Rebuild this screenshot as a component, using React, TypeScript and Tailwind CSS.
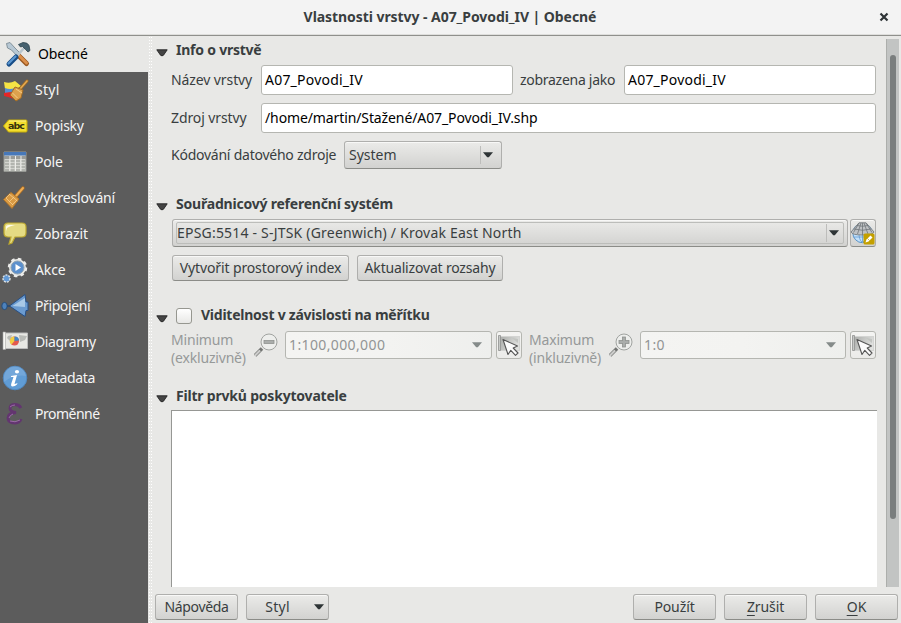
import type { ReactNode } from "react";

function Arrow({ className = "fill-[#2e3436]" }: { className?: string }) {
  return (
    <svg width="10" height="6" viewBox="0 0 10 6" className={`shrink-0 ${className}`}>
      <path d="M0 .3h10L5.8 5.3H4.2z" />
    </svg>
  );
}

function SectionTitle({ children, tracking, check = false }: { children: string; tracking: string; check?: boolean }) {
  return (
    <div className="flex h-5 items-center">
      <svg width="12" height="8" viewBox="0 0 12 8" className={`${check ? "mt-2" : "mt-1.5"} ml-[3px] shrink-0`}>
        <path d="M.8.8h10.4L7.5 6.2Q6 7.5 4.5 6.2z" fill="#444" stroke="#222" strokeWidth=".9" />
      </svg>
      {check && (
        <span className="mt-0.5 ml-2 h-4 w-4 shrink-0 rounded-[3px] border border-[#969790] bg-linear-to-b from-white to-[#e8e8e6]" />
      )}
      <span className={`${check ? "ml-[9px]" : "ml-2"} text-[14px] leading-5 font-bold whitespace-nowrap text-[#393e40] ${tracking}`}>{children}</span>
    </div>
  );
}

function Button({ children, className }: { children: ReactNode; className: string }) {
  return (
    <button
      className={`flex shrink-0 items-center justify-center rounded-[3px] border border-[#afafad] border-b-[#8b8c88] bg-linear-to-b from-[#ebebe9] to-[#d2d2d0] whitespace-nowrap shadow-[inset_0_1px_0_#f8f8f7] ${className}`}
    >
      {children}
    </button>
  );
}

function Field({ children, className }: { children: string; className: string }) {
  return (
    <div className={`flex h-[30px] shrink-0 items-center rounded-[3px] border border-[#b5b6b1] bg-white pl-[3px] text-black ${className}`}>{children}</div>
  );
}

function ScaleCombo({ children, className }: { children: string; className: string }) {
  return (
    <div className={`flex h-7 shrink-0 items-center justify-between rounded-[3px] border border-[#b5b6b1] bg-linear-to-r from-[#f4f4f2] via-[#f3f3f1] to-[#eeefed] pr-[9px] pl-[3px] tracking-[0.38px] text-[#929595] ${className}`}>
      {children}
      <Arrow className="fill-[#858b8a]" />
    </div>
  );
}

function Magnifier({ plus = false }: { plus?: boolean }) {
  return (
    <svg width="24" height="24" viewBox="0 0 24 24" className="shrink-0">
      <path d="m1 22.5 7-7" stroke="#737573" strokeWidth="3.6" />
      <path d="m1 22.5 5-5" stroke="#e8e8e6" strokeWidth="2" />
      <path d="m1 22.5 5-5" stroke="#999" strokeWidth=".7" />
      <circle cx="15" cy="9" r="8" fill="#edeeec" stroke="#a0a3a0" />
      <rect x="10" y="7.5" width="10" height="3" fill="#aaadab" stroke="#8f9290" strokeWidth=".8" />
      {plus && (
        <>
          <rect x="13.5" y="4" width="3" height="10" fill="#aaadab" stroke="#8f9290" strokeWidth=".8" />
          <path d="M11 9h8" stroke="#aaadab" strokeWidth="2" />
        </>
      )}
    </svg>
  );
}

function CanvasButton({ className }: { className: string }) {
  return (
    <button className={`flex h-7 w-[26px] shrink-0 items-center justify-center rounded-[3px] border border-[#b5b6b1] bg-linear-to-b from-[#f4f4f2] to-[#ebebe9] ${className}`}>
      <svg width="24" height="24" viewBox="0 0 24 24" className="shrink-0">
        <defs>
          <linearGradient id="sheet" x1="0" x2="1" y1="0" y2="0.4">
            <stop offset="0" stopColor="#a9aba8" />
            <stop offset="1" stopColor="#dfe0de" />
          </linearGradient>
        </defs>
        <rect x="2.5" y="3.500" width="20" height="14" fill="url(#sheet)" stroke="#d3d4d2" />
        <path d="M15 5l6 1v4z" fill="#c3c5c2" />
        <path d="M1.500 2.500h2v15h-2z" fill="#c7c9c6" stroke="#8f918f" strokeWidth=".8" />
        <path d="M6 6.500 20.500 13l-4.300 2 4.800 5-2.500 2.300-4.700-5-2.800 4.200z" fill="#fbfbfb" stroke="#555" strokeWidth="1.100" strokeLinejoin="round" />
      </svg>
    </button>
  );
}

function Globe() {
  return (
    <svg width="26" height="26" viewBox="0 0 26 26" className="shrink-0">
      <circle cx="12.5" cy="13" r="9.7" fill="#c3e1fa" stroke="#5592c9" />
      <path d="M3.5 17h18M9 13q0 7 3 9M16 13q0 7-3 9M12.5 13v9" fill="none" stroke="#659bd0" strokeWidth=".8" />
      <path d="M9 2.8h7l8 9.2q-1 3-11.500 3T1 12z" fill="#bfc2c5" stroke="#7f8487" strokeWidth="1" />
      <path d="M7 5.5q5.500 1.500 11 0M4 9q8.500 2.500 17 0M11 3 7.500 14M14 3l4 11M12.500 3v12M9 3 3.500 12.500M16 3l6 9.500" fill="none" stroke="#70767a" strokeWidth=".8" />
      <rect x="13.500" y="13.500" width="11" height="11" rx="1.500" fill="#c4a000" />
      <path d="m15.500 22.500 1-3 4-4 2 2-4 4z" fill="#fff" />
      <path d="m17.500 18.500 2 2" stroke="#c4a000" strokeWidth=".7" />
    </svg>
  );
}

const icons: Record<string, ReactNode> = {
  tools: (
    <>
      <path d="m15 15 8.500 8.500" stroke="#9a5821" strokeWidth="5" strokeLinecap="round" />
      <path d="m15 14.500 8.500 8.500" stroke="#db8f4b" strokeWidth="3" strokeLinecap="round" />
      <path d="m3.500 3.500 3.500-1L12 8l5 5-3 3-5.500-6-4-2z" fill="#b7c8d4" stroke="#71818c" strokeWidth=".8" />
      <path d="m14 16 7-8" stroke="#b9c6ce" strokeWidth="2.600" />
      <path d="m15.500 4.500 4.500-2q5 0 6 3l1 5-2 1.500-2.500-2.500-3-3-2 .5z" fill="#46616f" stroke="#2c424d" strokeWidth=".8" />
      <path d="m6 24 7-7" stroke="#174d87" strokeWidth="5" strokeLinecap="round" />
      <path d="m5.500 23.500 7-7" stroke="#5b96d0" strokeWidth="2.200" strokeLinecap="round" />
    </>
  ),
  style: (
    <>
      <path d="M1 6q6 2 11-1l6 5-6 4q-6 1-10-1z" fill="#f5e445" />
      <path d="M2 12q5 2 10 0l2 5q-6 3-12 1z" fill="#568dce" />
      <path d="M1 17q5-1 9-1l5 6-4 1q-5-2-10-3z" fill="#e52626" />
      <path d="m17 13 7-8" stroke="#a56b20" strokeWidth="3" strokeLinecap="round" />
      <path d="m17 13 7-8" stroke="#e3ab55" strokeWidth="1.500" strokeLinecap="round" />
      <path d="m12 11 8 3-2 8-5 3-6-6z" fill="#dda14d" stroke="#a36c25" />
      <path d="m13 13 6 4M9.500 17l5 5" stroke="#f5ce88" />
    </>
  ),
  label: (
    <>
      <path d="m.5 14 5-6H23q1 0 1 1v10q0 1-1 1H5.500z" fill="#f2dd2f" stroke="#c7ad08" />
      <path d="M6 9h17" stroke="#faf08c" />
      <text x="5" y="17.200" fontSize="9.500" fontWeight="bold" fontFamily="DejaVu Sans, sans-serif" fill="#34310d" textLength="17">abc</text>
    </>
  ),
  table: (
    <>
      <path d="M1 4h22v19.500H1z" fill="#d3d4cf" stroke="#969894" />
      <path d="M1 4h22v3.500H1z" fill="#4778b9" />
      <path d="M1 8h22v3H1z" fill="#999b98" />
      <path d="M7 8v15M12.500 8v15M18 8v15" stroke="#eeeeea" />
      <path d="M2 13h20M2 16h20M2 19h20M2 22h20" stroke="#92958f" strokeDasharray="4 1.500" />
    </>
  ),
  broom: (
    <>
      <path d="m13 12 7-8" stroke="#a46b28" strokeWidth="3.600" strokeLinecap="round" />
      <path d="m13 12 7-8" stroke="#efad54" strokeWidth="2" strokeLinecap="round" />
      <path d="m8 8.500 8 6.500-7 9.500-8.500-9z" fill="#d99a43" stroke="#b27528" />
      <path d="m6 10 8.500 7M3 14l7 7M7 10l-4 4M11 13l-5 5M14 16l-5 5" stroke="#f5ce91" strokeWidth=".8" />
    </>
  ),
  bubble: (
    <>
      <path d="M5 3h14q4 0 4 4v6q0 4-4 4h-7l-3 6-3 1 2-7H5q-4 0-4-4V7q0-4 4-4z" fill="#e5db83" stroke="#bca72f" strokeWidth="1.200" />
      <path d="M3 11V7q0-2 3-2h6Q7 6 4 8z" fill="#fffde8" />
    </>
  ),
  action: (
    <>
      <circle cx="14.500" cy="11.500" r="8.500" fill="#e7e8e4" stroke="#ececea" strokeWidth="2.500" strokeDasharray="3.500 3.180" />
      <circle cx="14.500" cy="11.500" r="6.500" fill="#5c90cd" stroke="#8fa3b5" />
      <path d="m12.500 8 5.500 3.500-5.500 3.500z" fill="#fff" />
      <circle cx="3.500" cy="22.500" r="3.500" fill="#639ad7" stroke="#dce1e4" strokeWidth="1.500" strokeDasharray="2 1" />
    </>
  ),
  join: (
    <>
      <path d="M6.500 14 22 2.500l1 7.500h2v8.500h-2l-1 6z" fill="#6b9bd0" stroke="#274f85" />
      <path d="m9.500 14 12.500-8v9z" fill="#a9c9e7" />
      <ellipse cx="1.500" cy="14" rx="2.700" ry="3.600" fill="#4e82bb" stroke="#234d7d" />
      <path d="M4 14h3" stroke="#244873" strokeWidth="1.500" />
    </>
  ),
  diagram: (
    <>
      <path d="M1 5h23.500v15.500H1z" fill="#e8e8e4" stroke="#bbb" />
      <path d="m5 8 4-1-2 6-3-3zM16 7l8 1-2 4-5 2z" fill="#b9bbb7" />
      <path d="M0 4h2.500v17.500H0z" fill="#f7f7f4" stroke="#aaa" strokeWidth=".6" />
      <circle cx="11.500" cy="13" r="4.500" fill="#e45a4e" />
      <path d="M11.500 13V8.500a4.500 4.500 0 0 0-3 8z" fill="#f2cf43" />
      <path d="M11.500 13V8.500q4.500 0 4.500 4z" fill="#4487c5" />
    </>
  ),
  info: (
    <>
      <circle cx="12" cy="14" r="11.800" fill="#609cd5" stroke="#5188bf" />
      <path d="M1 15A11 11 0 0 1 23 12Q11 10 1 18z" fill="#84b1df" opacity=".55" />
      <ellipse cx="14" cy="7.800" rx="2.100" ry="1.800" fill="#fff" />
      <path d="m8 12 6-1-2.500 9q1 0 3-1l-.5 1.500q-2 2-4.500 2-2 0-1.200-3L10.500 13H8z" fill="#fff" />
    </>
  ),
  epsilon: (
    <>
      <path d="M18 8q-2-3.500-6-3.500-5 0-5 4 0 3 6 4-8 .5-8 5.500 0 5 7 5 5 0 6-4" fill="none" stroke="#633570" strokeWidth="2.800" />
      <path d="M7 7q2-2 5-2M6 18q1-3 4-4M7 21q5 2 10-1" fill="none" stroke="#a876b5" strokeWidth=".8" />
    </>
  ),
};

const menu = [
  ["tools", "Obecné", "tracking-[-0.15px]"],
  ["style", "Styl", "tracking-[0.25px]"],
  ["label", "Popisky", "tracking-[-0.25px]"],
  ["table", "Pole", "tracking-[-0.2px]"],
  ["broom", "Vykreslování", "tracking-[-0.18px]"],
  ["bubble", "Zobrazit", "tracking-[-0.1px]"],
  ["action", "Akce", "tracking-[-0.1px]"],
  ["join", "Připojení", "tracking-[-0.4px]"],
  ["diagram", "Diagramy", "tracking-[-0.4px]"],
  ["info", "Metadata", "tracking-[-0.35px]"],
  ["epsilon", "Proměnné", "tracking-[-0.5px]"],
];

export default function App() {
  return (
    <div className="flex h-[623px] w-[901px] flex-col overflow-hidden bg-[#e8e8e6] font-['Noto_Sans',sans-serif] text-[14px] leading-[18px] whitespace-nowrap text-[#393e40]">
      <header className="flex h-9 shrink-0 items-center border-b border-[#8f908c] bg-[#f3f3f3] pb-0.5 shadow-[inset_0_-1px_0_#dededc]">
        <div className="w-[44px]" />
        <h1 className="flex-1 pr-[1px] text-center text-[14px] font-bold tracking-[-0.06px]">Vlastnosti vrstvy - A07_Povodi_IV | Obecné</h1>
        <div className="flex w-[44px] justify-center pl-2.5">
          <svg width="10" height="10" viewBox="0 0 10 10"><path d="m1.500 1.500 7 7m0-7-7 7" stroke="#2e3436" strokeWidth="2.200" /></svg>
        </div>
      </header>
      <div className="flex min-h-0 flex-1">
        <nav className="w-[148px] shrink-0 bg-[#5c5c5c] text-[#f5f5f5]">
          {menu.map(([icon, name, tracking], i) => (
            <div key={icon} className={`flex h-9 items-center ${i === 0 ? "bg-[#e8e8e6] pl-[3px] text-black" : "pl-[3px]"}`}>
              <svg width="28" height="28" viewBox="0 0 28 28" className="shrink-0 overflow-visible">{icons[icon]}</svg>
              <span className={`${i === 0 ? "ml-[7px]" : "ml-1"} ${tracking}`}>{name}</span>
            </div>
          ))}
        </nav>
        <div className="w-[5px] shrink-0 bg-[radial-gradient(circle_at_1.5px_1.5px,#fff_0.8px,transparent_0.9px)] bg-size-[2px_3px]" />
        <div className="flex min-w-0 flex-1 flex-col">
          <div className="flex h-[551px] justify-between">
            <main className="w-[724px] pt-1">
              <SectionTitle tracking="tracking-[-0.23px]">Info o vrstvě</SectionTitle>
              <div className="mt-[5px] flex h-[30px] items-center pl-[18px]">
                <span className="w-[90px] tracking-[-0.1px]">Název vrstvy</span>
                <Field className="w-[252px] tracking-[0.22px]">A07_Povodi_IV</Field>
                <span className="w-[111px] pl-[7px] tracking-[-0.28px]">zobrazena jako</span>
                <Field className="w-[252px] tracking-[0.22px]">A07_Povodi_IV</Field>
              </div>
              <div className="mt-2 flex h-[30px] items-center pl-[18px]">
                <span className="w-[90px] tracking-[-0.1px]">Zdroj vrstvy</span>
                <Field className="w-[615px] tracking-[-0.11px]">/home/martin/Stažené/A07_Povodi_IV.shp</Field>
              </div>
              <div className="mt-2 flex h-7 items-center pl-[18px]">
                <span className="w-[173px] tracking-[-0.24px]">Kódování datového zdroje</span>
                <Button className="h-7 w-[158px]">
                  <span className="flex-1 pl-1 text-left">System</span>
                  <span className="mr-[2px] h-[18px] w-px bg-[#bdbdbb]" />
                  <Arrow className="mr-2 fill-[#2e3436]" />
                </Button>
              </div>
              <div className="mt-[25px]"><SectionTitle tracking="tracking-[-0.21px]">Souřadnicový referenční systém</SectionTitle></div>
              <div className="mt-[5px] flex h-7 items-center gap-0.5 pl-[19px]">
                <Button className="h-7 w-[676px] px-[3px]">
                  <span className="flex h-[22px] flex-1 items-center rounded-xs border border-[#bcbdba] text-left">
                    <span className="flex-1 tracking-[0.2px]">EPSG:5514 - S-JTSK (Greenwich) / Krovak East North</span>
                    <span className="mr-0.5 h-[18px] w-px bg-[#bdbdbb]" />
                    <Arrow className="mr-1 fill-[#2e3436]" />
                  </span>
                </Button>
                <Button className="h-7 w-[26px]"><Globe /></Button>
              </div>
              <div className="mt-2 flex gap-2 pl-[19px]">
                <Button className="h-[26px] w-[177px] tracking-[-0.12px]">Vytvořit prostorový index</Button>
                <Button className="h-[26px] w-[146px] tracking-[-0.18px]">Aktualizovat rozsahy</Button>
              </div>
              <div className="mt-6"><SectionTitle check tracking="tracking-[-0.24px]">Viditelnost v závislosti na měřítku</SectionTitle></div>
              <div className="mt-1.5 flex h-9 items-start pl-[18px] text-[#969999]">
                <span className="w-[82px] tracking-[-0.18px]">Minimum<br />(exkluzivně)</span>
                <span className="w-8 pt-0.5 pl-px"><Magnifier /></span>
                <ScaleCombo className="w-[207px]">1:100,000,000</ScaleCombo>
                <CanvasButton className="ml-1" />
                <span className="w-[79px] pl-[7px] tracking-[-0.18px]">Maximum<br />(inkluzivně)</span>
                <span className="w-[39px] pt-0.5 pl-2"><Magnifier plus /></span>
                <ScaleCombo className="w-[206px]">1:0</ScaleCombo>
                <CanvasButton className="ml-1" />
              </div>
              <div className="mt-[19px]"><SectionTitle tracking="tracking-[-0.2px]">Filtr prvků poskytovatele</SectionTitle></div>
              <div className="mt-1 ml-[18px] h-[177px] w-[706px] border-t border-l border-[#969794] bg-white" />
            </main>
            <div className="mt-[3px] mr-0.5 h-[548px] w-[13px] border-l border-[#acaeab] bg-[#c2c4c3] px-[3px] pt-4">
              <div className="h-[464px] w-1.5 rounded-full bg-[#7a7e7e]" />
            </div>
          </div>
          <footer className="mt-[7px] flex gap-2 px-0.5">
            <Button className="h-[26px] w-[83px] tracking-[-0.35px]">Nápověda</Button>
            <Button className="h-[26px] w-[83px]"><span className="mr-6 pl-3.5 tracking-[0.25px]">Styl</span><Arrow /></Button>
            <div className="flex-1" />
            <Button className="h-[26px] w-[83px] tracking-[-0.1px]">Použít</Button>
            <Button className="h-[26px] w-[83px] tracking-[-0.1px]"><span><u className="underline-offset-3">Z</u>rušit</span></Button>
            <Button className="mr-px h-[26px] w-[83px]"><span><u className="underline-offset-3">O</u>K</span></Button>
          </footer>
        </div>
      </div>
    </div>
  );
}
